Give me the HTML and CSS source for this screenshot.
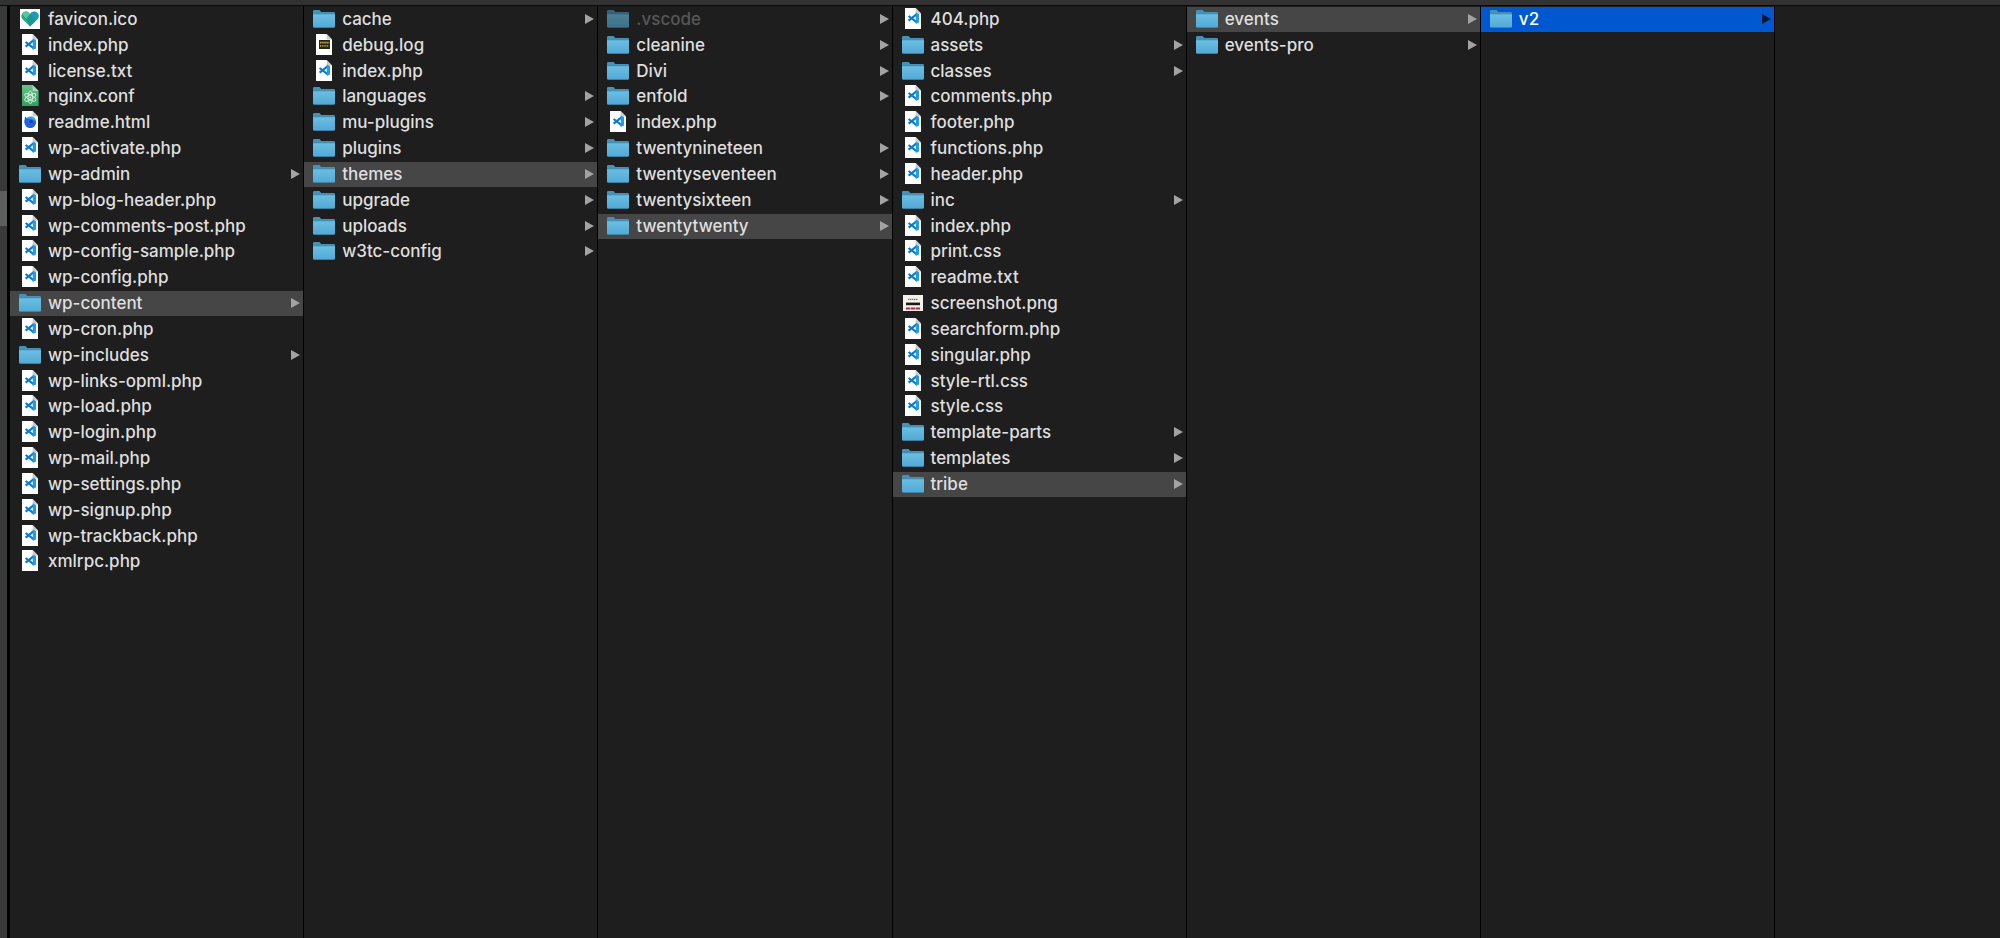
FILE: index.html
```html
<!DOCTYPE html>
<html lang="en">
<head>
  <meta charset="UTF-8">
  <meta name="viewport" content="width=device-width, initial-scale=1.0">
  <title>v2</title>
  <link rel="stylesheet" href="styles.css">
</head>
<body>
  <!-- Icons -->
  <svg class="sprite" aria-hidden="true">
    <defs>
      <linearGradient id="folder-front" x1="0" y1="0" x2="0" y2="1">
        <stop offset="0" stop-color="#6cbfe3"/>
        <stop offset="1" stop-color="#52a9d5"/>
      </linearGradient>
      <linearGradient id="conf-green" x1="0" y1="0" x2="0" y2="1">
        <stop offset="0" stop-color="#6cc287"/>
        <stop offset="1" stop-color="#2f9f62"/>
      </linearGradient>
      <linearGradient id="fox-blue" x1="0" y1="0" x2="1" y2="1">
        <stop offset="0" stop-color="#35c4f5"/>
        <stop offset="1" stop-color="#1546d8"/>
      </linearGradient>
    </defs>

    <symbol id="folder" viewBox="0 0 22 22">
      <path fill="#4592b8" d="M0 3.2Q0 2 1.2 2H6.6L8.2 4H20.8Q22 4 22 5.2V10H0Z"/>
      <path fill="url(#folder-front)" d="M0 6H22V18.6Q22 19.6 21 19.6H1Q0 19.6 0 18.6Z"/>
      <path fill="#3f88ad" d="M0 5.4H22V6.2H0ZM.4 18.9H21.6L21 19.7H1Z"/>
    </symbol>

    <symbol id="code" viewBox="0 0 22 22">
      <path fill="#fff" d="M3 0H13.6L19 5.4V21H3Z"/>
      <path fill="#c9cccf" d="M13.6 0V5.4H19Z"/>
      <path fill="none" stroke="#0a7bcc" stroke-width="2.2" d="M6.6 8 14.8 14.4M6.6 12.6 14.8 6.2"/>
      <path fill="#1f9cf0" d="M13.8 4.6 17 6V14.6L13.8 16Z"/>
    </symbol>

    <symbol id="conf" viewBox="0 0 22 22">
      <path fill="url(#conf-green)" d="M3 0H13.6L19.6 6V21H3Z"/>
      <path fill="#a7dcb8" d="M13.6 0V6H19.6Z"/>
      <g fill="none" stroke="#d9f3e2" stroke-width="0.9">
        <ellipse cx="11.3" cy="12.4" rx="2.3" ry="6.2"/>
        <ellipse cx="11.3" cy="12.4" rx="2.3" ry="6.2" transform="rotate(60 11.3 12.4)"/>
        <ellipse cx="11.3" cy="12.4" rx="2.3" ry="6.2" transform="rotate(120 11.3 12.4)"/>
      </g>
      <circle cx="11.3" cy="12.4" r="1" fill="#d9f3e2"/>
    </symbol>

    <symbol id="html" viewBox="0 0 22 22">
      <path fill="#fff" d="M3 0H13.6L19 5.4V21H3Z"/>
      <path fill="#c9cccf" d="M13.6 0V5.4H19Z"/>
      <circle cx="11.2" cy="11.2" r="5.8" fill="url(#fox-blue)"/>
      <path fill="#27b9f2" d="M11.4 5.2Q16.6 5.6 17 10.6L14.6 8.6Q12.6 8.4 11.4 5.2Z"/>
      <path fill="#1f62e0" d="M5.4 10.4 6 5.6 8.2 7.6 11.6 8 9.4 9.8Q9 12.6 12 13 14.8 12.8 14.6 9.8L17 11Q16.4 16.6 11.2 17 6 16.4 5.4 10.4Z"/>
      <circle cx="12" cy="10.6" r="2" fill="#3238a8"/>
    </symbol>

    <symbol id="log" viewBox="0 0 22 22">
      <path fill="#fff" d="M3 0H13.6L19 5.4V21H3Z"/>
      <path fill="#c9cccf" d="M13.6 0V5.4H19Z"/>
      <path fill="#26241f" d="M6 6H17V15H6Z"/>
      <path fill="none" stroke="#c3a42c" stroke-width="1.6" stroke-dasharray="1.6 .5" d="M7 8.6H16.4"/>
      <path fill="none" stroke="#c3a42c" stroke-width="1.8" stroke-dasharray="1 .8" d="M7 11.8H16"/>
    </symbol>

    <symbol id="heart" viewBox="0 0 22 22">
      <path fill="#fff" d="M1 1H21V21H1Z"/>
      <path fill="#27a688" d="M11 18.6 3.4 11Q1.4 8.2 3.2 5.4 5 2.8 8 3.6 10 4.2 11 6 12.4 3.6 15 3.4 18 3.4 19.4 6.2 20.4 9 18.4 11.2Z"/>
      <path fill="#5cc794" d="M3 5.6Q5.4 2.6 8.4 3.8L11 6.2 6.8 10.6Z"/>
      <path fill="#1c9bbf" d="M11 6Q13 3.2 15.8 3.4 18.8 4 19.6 7 19.6 9.4 18.2 11.4L15.4 14Z"/>
      <path fill="#1f9490" d="M11 6 15.4 10.4 15.4 14.2 11 18.6 8.4 13Z"/>
    </symbol>

    <symbol id="shot" viewBox="0 0 22 22">
      <path fill="#f4f1ea" d="M1 3H21V19H1Z"/>
      <path stroke="#777" stroke-width="1.2" stroke-dasharray="1.4 .5" d="M6 7.4H16"/>
      <path fill="#1b1b1b" d="M4 10.6H18V13.2H4Z"/>
      <path fill="#bd2346" d="M4 15.6H8.4V17.4H4ZM9 15.6H13.4V17.4H9ZM14 15.6H18V17.4H14Z"/>
    </symbol>
  </svg>

  <div class="toolbar"></div>

  <div class="window">
    <aside class="sidebar">
      <div class="sidebar-selected"></div>
    </aside>

    <!-- Columns -->
    <main class="columns">
      <ul class="column">
        <li><a href="#"><svg><use href="#heart"/></svg>favicon.ico</a></li>
        <li><a href="#"><svg><use href="#code"/></svg>index.php</a></li>
        <li><a href="#"><svg><use href="#code"/></svg>license.txt</a></li>
        <li><a href="#"><svg><use href="#conf"/></svg>nginx.conf</a></li>
        <li><a href="#"><svg><use href="#html"/></svg>readme.html</a></li>
        <li><a href="#"><svg><use href="#code"/></svg>wp-activate.php</a></li>
        <li><a href="#" class="folder"><svg><use href="#folder"/></svg>wp-admin</a></li>
        <li><a href="#"><svg><use href="#code"/></svg>wp-blog-header.php</a></li>
        <li><a href="#"><svg><use href="#code"/></svg>wp-comments-post.php</a></li>
        <li><a href="#"><svg><use href="#code"/></svg>wp-config-sample.php</a></li>
        <li><a href="#"><svg><use href="#code"/></svg>wp-config.php</a></li>
        <li><a href="#" class="folder open"><svg><use href="#folder"/></svg>wp-content</a></li>
        <li><a href="#"><svg><use href="#code"/></svg>wp-cron.php</a></li>
        <li><a href="#" class="folder"><svg><use href="#folder"/></svg>wp-includes</a></li>
        <li><a href="#"><svg><use href="#code"/></svg>wp-links-opml.php</a></li>
        <li><a href="#"><svg><use href="#code"/></svg>wp-load.php</a></li>
        <li><a href="#"><svg><use href="#code"/></svg>wp-login.php</a></li>
        <li><a href="#"><svg><use href="#code"/></svg>wp-mail.php</a></li>
        <li><a href="#"><svg><use href="#code"/></svg>wp-settings.php</a></li>
        <li><a href="#"><svg><use href="#code"/></svg>wp-signup.php</a></li>
        <li><a href="#"><svg><use href="#code"/></svg>wp-trackback.php</a></li>
        <li><a href="#"><svg><use href="#code"/></svg>xmlrpc.php</a></li>
      </ul>

      <ul class="column">
        <li><a href="#" class="folder"><svg><use href="#folder"/></svg>cache</a></li>
        <li><a href="#"><svg><use href="#log"/></svg>debug.log</a></li>
        <li><a href="#"><svg><use href="#code"/></svg>index.php</a></li>
        <li><a href="#" class="folder"><svg><use href="#folder"/></svg>languages</a></li>
        <li><a href="#" class="folder"><svg><use href="#folder"/></svg>mu-plugins</a></li>
        <li><a href="#" class="folder"><svg><use href="#folder"/></svg>plugins</a></li>
        <li><a href="#" class="folder open"><svg><use href="#folder"/></svg>themes</a></li>
        <li><a href="#" class="folder"><svg><use href="#folder"/></svg>upgrade</a></li>
        <li><a href="#" class="folder"><svg><use href="#folder"/></svg>uploads</a></li>
        <li><a href="#" class="folder"><svg><use href="#folder"/></svg>w3tc-config</a></li>
      </ul>

      <ul class="column">
        <li><a href="#" class="folder hidden-file"><svg><use href="#folder"/></svg>.vscode</a></li>
        <li><a href="#" class="folder"><svg><use href="#folder"/></svg>cleanine</a></li>
        <li><a href="#" class="folder"><svg><use href="#folder"/></svg>Divi</a></li>
        <li><a href="#" class="folder"><svg><use href="#folder"/></svg>enfold</a></li>
        <li><a href="#"><svg><use href="#code"/></svg>index.php</a></li>
        <li><a href="#" class="folder"><svg><use href="#folder"/></svg>twentynineteen</a></li>
        <li><a href="#" class="folder"><svg><use href="#folder"/></svg>twentyseventeen</a></li>
        <li><a href="#" class="folder"><svg><use href="#folder"/></svg>twentysixteen</a></li>
        <li><a href="#" class="folder open"><svg><use href="#folder"/></svg>twentytwenty</a></li>
      </ul>

      <ul class="column">
        <li><a href="#"><svg><use href="#code"/></svg>404.php</a></li>
        <li><a href="#" class="folder"><svg><use href="#folder"/></svg>assets</a></li>
        <li><a href="#" class="folder"><svg><use href="#folder"/></svg>classes</a></li>
        <li><a href="#"><svg><use href="#code"/></svg>comments.php</a></li>
        <li><a href="#"><svg><use href="#code"/></svg>footer.php</a></li>
        <li><a href="#"><svg><use href="#code"/></svg>functions.php</a></li>
        <li><a href="#"><svg><use href="#code"/></svg>header.php</a></li>
        <li><a href="#" class="folder"><svg><use href="#folder"/></svg>inc</a></li>
        <li><a href="#"><svg><use href="#code"/></svg>index.php</a></li>
        <li><a href="#"><svg><use href="#code"/></svg>print.css</a></li>
        <li><a href="#"><svg><use href="#code"/></svg>readme.txt</a></li>
        <li><a href="#"><svg><use href="#shot"/></svg>screenshot.png</a></li>
        <li><a href="#"><svg><use href="#code"/></svg>searchform.php</a></li>
        <li><a href="#"><svg><use href="#code"/></svg>singular.php</a></li>
        <li><a href="#"><svg><use href="#code"/></svg>style-rtl.css</a></li>
        <li><a href="#"><svg><use href="#code"/></svg>style.css</a></li>
        <li><a href="#" class="folder"><svg><use href="#folder"/></svg>template-parts</a></li>
        <li><a href="#" class="folder"><svg><use href="#folder"/></svg>templates</a></li>
        <li><a href="#" class="folder open"><svg><use href="#folder"/></svg>tribe</a></li>
      </ul>

      <ul class="column">
        <li><a href="#" class="folder open"><svg><use href="#folder"/></svg>events</a></li>
        <li><a href="#" class="folder"><svg><use href="#folder"/></svg>events-pro</a></li>
      </ul>

      <ul class="column">
        <li><a href="#" class="folder selected"><svg><use href="#folder"/></svg>v2</a></li>
      </ul>
    </main>
  </div>
</body>
</html>
```
FILE: styles.css
```css
/* General Styles */
* {
  box-sizing: border-box;
}

body {
  display: flex;
  flex-direction: column;
  min-height: 100vh;
  margin: 0;
  background-color: #1e1e1e;
  color: #dfdfdf;
  font-family: Inter, sans-serif;
  font-size: 17px;
  font-weight: 500;
  line-height: 22px;
}

.sprite {
  position: absolute;
  width: 0;
  height: 0;
}

/* Window */
.toolbar {
  height: 6px;
  background: #323232;
  border-bottom: 1px solid #0a0a0a;
}

.window {
  display: flex;
  flex: 1;
}

.sidebar {
  width: 10px;
  padding-top: 185px;
  background: #383a39;
  border-right: 3px solid #000;
}

.sidebar-selected {
  height: 35px;
  background: #5c5d5d;
}

/* Columns */
.columns {
  display: grid;
  flex: 1;
  grid-template-columns: repeat(6, 17fr) 13fr;
}

.column {
  display: grid;
  grid-template-rows: repeat(36, minmax(25px, 1fr));
  margin: 0;
  padding: 0 0 2px;
  border-right: 1px solid #000;
  list-style: none;
}

.column li {
  display: flex;
  padding-top: 1px;
}

.column a {
  display: flex;
  flex: 1;
  align-items: center;
  gap: 7px;
  padding: 0 3px 1px 9px;
  color: inherit;
  text-decoration: none;
  white-space: nowrap;
}

.column svg {
  flex: none;
  width: 22px;
  height: 22px;
}

/* Arrow on folders */
.folder::after {
  content: "";
  margin-left: auto;
  border-left: 9px solid #a3a3a3;
  border-top: 5px solid transparent;
  border-bottom: 5px solid transparent;
}

.open {
  background: #464646;
}

.column .selected {
  background: #0058d0;
  color: #fff;
}

.selected::after {
  border-left-color: #06183a;
}

.column .hidden-file {
  color: #575757;
}

.hidden-file svg {
  opacity: 0.6;
}
```
